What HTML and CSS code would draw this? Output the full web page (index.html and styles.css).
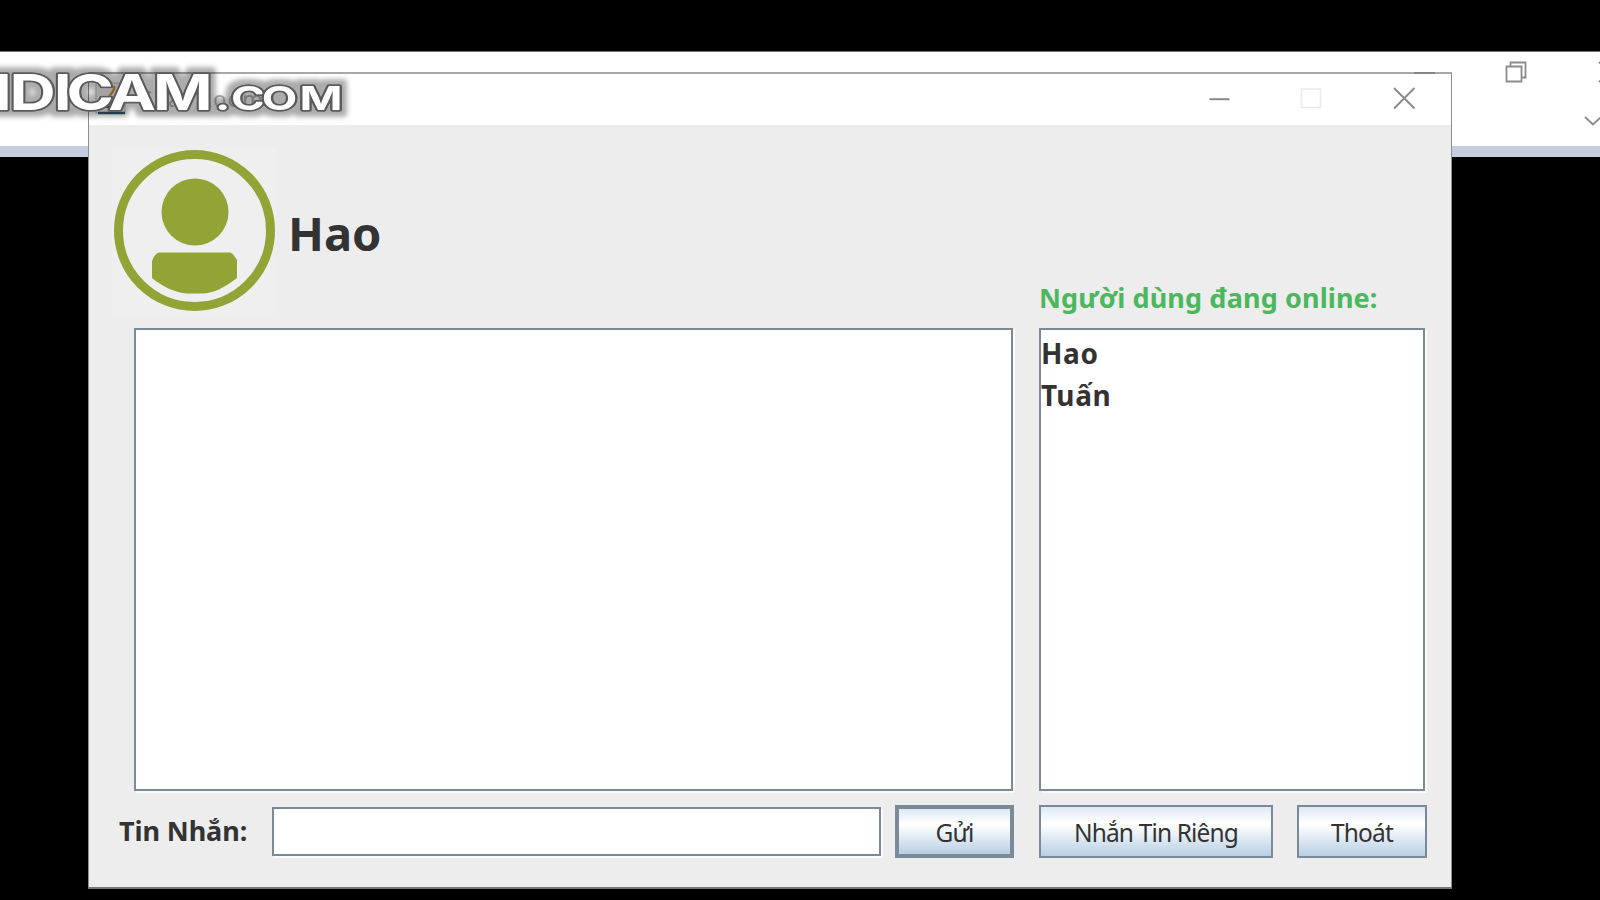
FILE: index.html
```html
<!DOCTYPE html>
<html lang="vi">
<head>
<meta charset="utf-8">
<title>Chat Room</title>
<link rel="stylesheet" href="styles.css">
</head>
<body>
<div class="desktop">
  <div class="back-window">
    <svg class="back-controls" width="140" height="95" viewBox="1460 51 140 95" fill="none" stroke="#8c8c8c" stroke-width="1.8">
      <path d="M1506.5 66.500H1521.500V81.500H1506.500Z"/>
      <path d="M1510.500 66.500V62.500H1525.500V77.500H1521.500"/>
      <path d="M1599 62l10 10-10 10M1585 117l8 7.500 8-7.500"/>
    </svg>
  </div>

  <main class="dialog">
    <header class="titlebar">
      <svg class="java" width="32" height="34" viewBox="0 0 32 34" fill="none">
        <rect x="1" y="1" width="29" height="30" fill="#f5f5f5" stroke="#b4bfc6"/>
        <path d="M17 20c-9-6 4-8 2-16M20 20c-3-4 1-5 3-8" stroke="#df9136" stroke-width="2.500"/>
        <path d="M7 23c5 3 13 3 18 0M3 31h27" stroke="#33586f" stroke-width="2.500"/>
      </svg>
      <span class="title">Chat Room</span>
      <svg class="controls" width="240" height="50" viewBox="1200 74 240 50" fill="none" stroke="#8a8a8a" stroke-width="2">
        <path d="M1209.500 99.200H1229.500"/>
        <path d="M1301.500 89H1320.500V107.500H1301.500Z" stroke="#ebebeb" stroke-width="1.600"/>
        <path d="M1394 88l20.500 20.500M1414.500 88L1394 108.500" stroke-width="1.900"/>
      </svg>
    </header>

    <section class="profile">
      <svg class="avatar" width="164" height="164" viewBox="0 0 164 164">
        <rect width="164" height="164" fill="#efeff0"/>
        <circle cx="82.500" cy="81.500" r="76" fill="none" stroke="#94a336" stroke-width="9"/>
        <circle cx="83" cy="63" r="33.500" fill="#94a336"/>
        <path d="M47 103.500H118Q121 104 125 111V129C113 138 102 144.500 90 144.500H74C61 143 50 137 40 129V112Q43 104 47 103.500Z" fill="#94a336"/>
      </svg>
      <h1 class="name">Hao</h1>
    </section>
    <h2 class="online">Người dùng đang online:</h2>

    <div class="field messages"></div>
    <ul class="field users"><li>Hao</li><li>Tuấn</li></ul>

    <div class="compose">
      <label class="label">Tin Nhắn:</label>
      <div class="field entry"></div>
      <button class="button send">Gửi</button>
    </div>
    <div class="actions">
      <button class="button private">Nhắn Tin Riêng</button>
      <button class="button exit">Thoát</button>
    </div>
  </main>

  <div class="minimize-edge"></div>

  <svg class="watermark" width="380" height="90" viewBox="0 50 380 90">
    <defs>
      <filter id="halo" filterUnits="userSpaceOnUse" x="-60" y="50" width="440" height="90">
        <feMorphology in="SourceAlpha" operator="dilate" radius="5" result="wide"/>
        <feGaussianBlur in="wide" stdDeviation="2.500" result="soft"/>
        <feComponentTransfer in="soft" result="shade"><feFuncA type="linear" slope=".33"/></feComponentTransfer>
        <feMerge><feMergeNode in="shade"/><feMergeNode in="SourceGraphic"/></feMerge>
      </filter>
    </defs>
    <g class="mark" filter="url(#halo)">
      <text class="big" transform="translate(0 110) scale(1.280 1)" x="-29 7.500 42 52 84.500 119.500">NDICAM</text>
      <text class="small" transform="translate(0 110) scale(1.400 1)" x="153.500 165 187 214">.COM</text>
    </g>
  </svg>
</div>
</body>
</html>
```

FILE: styles.css
```css
* { box-sizing: border-box; }
body { margin: 0; background: #000; font-family: "Noto Sans", "Open Sans", sans-serif; }
.desktop { position: relative; width: 1600px; height: 900px; overflow: hidden; background: #000; padding-top: 51px; }

.back-window { height: 106px; background: #fff; border-top: 1px solid #777; border-bottom: 11px solid #c5cee0; display: flex; justify-content: flex-end; }
.back-controls { display: block; margin-top: -1px; }

.dialog {
  position: absolute; left: 88px; top: 72px; width: 1364px; height: 817px;
  border: 1px solid #8f8f8f; border-width: 2px 1px 2px 1px; border-top-color: #a8a8a8; border-bottom-color: #777; background: #ededed;
  display: grid; grid-template-columns: 925px 388px; column-gap: 25px;
  grid-template-rows: 51px 203px 463px 1fr; 
}
.titlebar { grid-column: 1 / 3; width: 1362px; background: #fff; display: flex; align-items: flex-start; }
.java { margin: 8px 0 0 6px; }
.title { margin: 8px 0 0 11px; font-size: 22px; line-height: 32px; color: #b4b4b4; letter-spacing: 1.3px; }
.controls { margin-left: auto; margin-right: 11px; }

.profile { display: flex; padding: 24px 0 0 23px; }
.avatar { flex: none; }
.name { margin: 52px 0 0 12px; font-size: 47px; line-height: 64px; color: #333; }
.online { margin: 0; align-self: end; padding-bottom: 11px; font-size: 27px; line-height: 38px; letter-spacing: .1px; color: #4cb85e; white-space: nowrap; }

.field { background: #fff; border: 2px solid #7a8a99; box-shadow: 2px 2px 0 #fafafa; }
.messages { margin-left: 45px; width: 879px; height: 463px; }
.users { margin: 0; padding: 2px 0 0; list-style: none; width: 386px; height: 463px; font-size: 28px; font-weight: 700; line-height: 42px; letter-spacing: .6px; color: #333; }

.compose, .actions { display: flex; align-items: flex-start; padding-top: 13px; }
.compose { padding-left: 30px; }
.label { width: 153px; font-size: 27px; line-height: 53px; font-weight: 700; letter-spacing: -.1px; color: #333; white-space: nowrap; }
.entry { width: 609px; height: 49px; margin: 3px 14px 0 0; }
.button {
  flex: none; height: 53px; margin-top: 1px; padding: 2px 0 0; border: 2px solid #7a8a99; border-radius: 0;
  background: linear-gradient(#dde8f3 0%, #fff 32%, #fff 36%, #b8cfe5 100%);
  font: 24.5px/47px "Noto Sans", "Open Sans", sans-serif; letter-spacing: -.85px; color: #333; white-space: nowrap;
}
.send { width: 119px; border-width: 4px; line-height: 43px; }
.private { width: 234px; margin-right: 24px; }
.exit { width: 130px; }

.minimize-edge { position: absolute; left: 1414px; top: 72px; width: 21px; height: 2px; background: #858585; }

.watermark { position: absolute; left: 0; top: 50px; }
.mark text { font-family: Inter, sans-serif; font-weight: 700; fill: #fff; stroke: #5a5a5a; stroke-width: 3.5px; stroke-linejoin: round; paint-order: stroke; }
.mark .big { font-size: 50px; }
.mark .small { font-size: 33px; }
```
